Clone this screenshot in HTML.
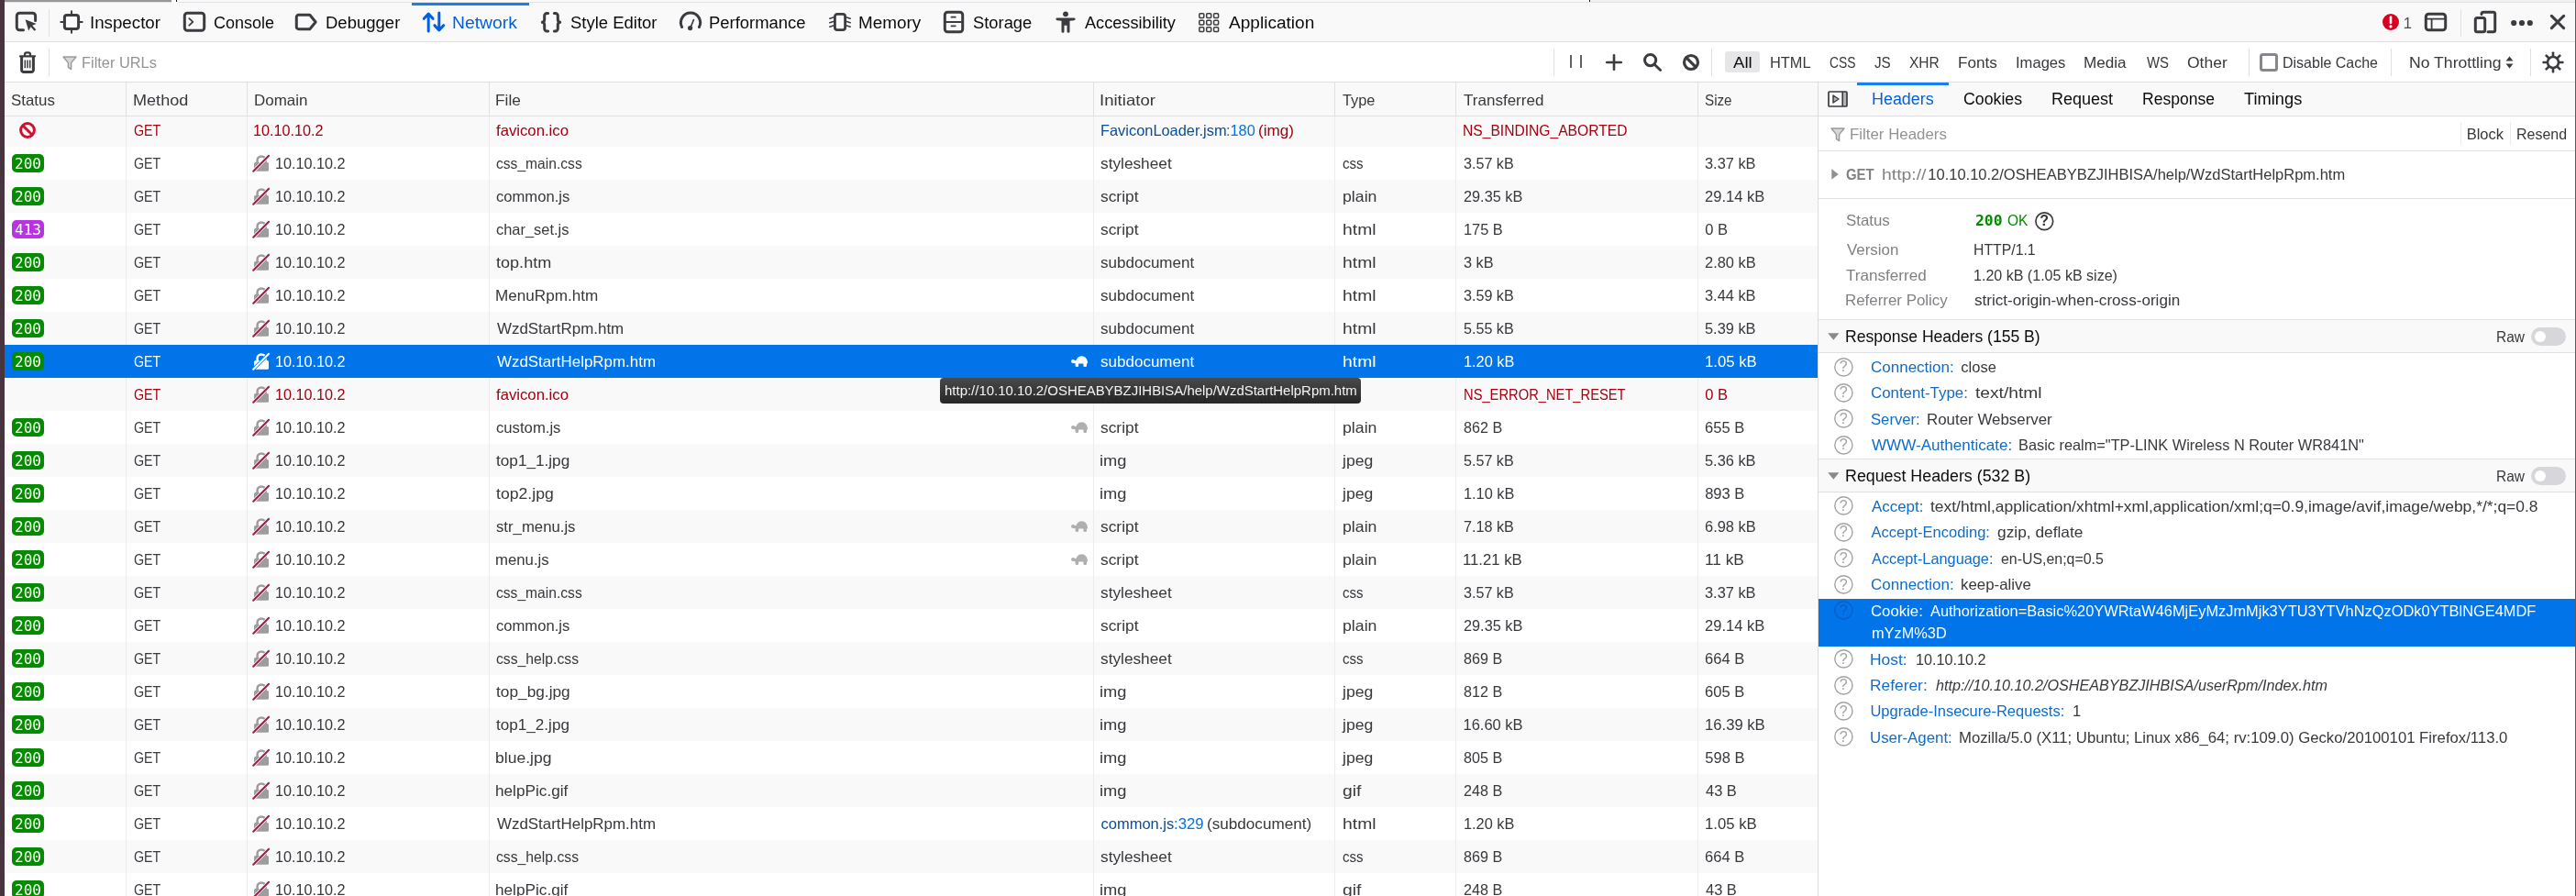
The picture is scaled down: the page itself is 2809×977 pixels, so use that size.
<!DOCTYPE html>
<html lang="en"><head><meta charset="utf-8"><title>Network - Developer Tools</title>
<style>
*{box-sizing:border-box}
html,body{margin:0;padding:0}
body{width:2809px;height:977px;overflow:hidden;position:relative;background:#fff;
 font-family:"Liberation Sans",sans-serif;font-size:16.5px;color:#38383d;will-change:transform}
.a{position:absolute;white-space:nowrap}
.t{position:absolute;white-space:nowrap;line-height:24px;height:24px;transform-origin:0 0}
svg{position:absolute;overflow:visible}
#strip{left:0;top:0;width:4.7px;height:977px;background:#48343e}
#topline{left:5px;top:0;width:2804px;height:3px;background:#fafafa;border-bottom:1px solid #e2e2e4}
#thumb{left:5px;top:0;width:182px;height:2px;background:#979797}
#toolbar{left:5px;top:3px;width:2804px;height:43px;background:#f9f9fa;border-bottom:1px solid #e0e0e2}
#filterbar{left:5px;top:46px;width:2804px;height:44px;background:#fff;border-bottom:1px solid #e0e0e2}
#thead{z-index:2;left:5px;top:90px;width:1976.5px;height:37px;background:#f9f9fa;border-bottom:1px solid #e0e0e2}
.vsep{z-index:3;position:absolute;width:1px;background:#e0e0e2}
.tab{color:#0c0c0d}
.tab.sel{color:#0060df}
.ph{color:#939396}
.row{position:absolute;left:5px;width:1976.5px;height:36px}
.row.odd{background:#f9f9fa}
.row.sel{background:#0074e8;color:#fff;z-index:4}
.row.err{color:#a4000f}
.badge{position:absolute;left:8px;top:8px;width:35px;height:20px;border-radius:5px;color:#fff;
 font-family:"DejaVu Sans Mono",monospace;font-size:16px;line-height:21.5px;text-align:center}
.b2{background:#058b00}
.b4{background:#b833e1}
.lnk{color:#0a4a9a}
.lnk b{font-weight:normal;color:#0074e8}
#side{left:1983px;top:90px;width:826px;height:887px;background:#fff}
#split{left:1981.5px;top:90px;width:1px;height:887px;background:#dcdcde}
#stabs{left:0;top:0;width:826px;height:37px;background:#f9f9fa;border-bottom:1px solid #e0e0e2}
.hl{position:absolute;left:0;width:826px;height:1px;background:#e0e0e2}
.sec{position:absolute;left:0;width:826px;height:37px;background:#f9f9fa;border-top:1px solid #e0e0e2;border-bottom:1px solid #e0e0e2}
.lbl{color:#808085}
.hn{color:#0f6cc8}
.dark{color:#0c0c0d}
#tip{z-index:5;left:1025px;top:412px;width:459px;height:28px;background:linear-gradient(rgba(68,68,68,.97),rgba(31,31,31,.97));border-radius:4px}
</style></head>
<body>
<div class="a" id="strip"></div><div class="a" id="topline"></div><div class="a" id="thumb"></div><div class="a" style="left:187px;top:0;width:8px;height:3px;background:#fff"></div><div class="a" style="left:192px;top:0;width:1px;height:2px;background:#111"></div><div class="a" style="left:1735px;top:0;width:1073px;height:2px;background:#f0f1f0"></div><div class="a" style="left:1729px;top:0;width:6px;height:2px;background:#fff"></div><div class="a" style="left:1733px;top:0;width:1px;height:2px;background:#111"></div>
<div class="a" id="toolbar">
<svg style="left:12px;top:10px" width="24" height="22" viewBox="0 0 24 22" ><path d="M21.6 9.5V4.2a3 3 0 0 0-3-3H4.3a3 3 0 0 0-3 3v12.6a3 3 0 0 0 3 3H8.5" fill="none" stroke="#3b3b40" stroke-width="3" stroke-linecap="round"/><path d="M10.6 8.2l3.6 12.2 2.3-4.2 4.1 4.6 1.7-1.5-4.1-4.6 4.4-1.7z" fill="#3b3b40"/></svg><div class="vsep" style="left:48px;top:7px;height:30px"></div><svg style="left:61px;top:9px" width="24" height="24" viewBox="0 0 24 24" ><rect x="4.4" y="4.4" width="15.2" height="15.2" rx="2.6" fill="none" stroke="#3b3b40" stroke-width="3"/><path d="M12 0.3v4M12 19.7v4M0.3 12h4M19.7 12h4" stroke="#3b3b40" stroke-width="2" stroke-linecap="round"/></svg><span class="t tab" style="left:93.34px;top:10.0px;transform:scaleX(1.0396);font-size:18px">Inspector</span><svg style="left:195px;top:10px" width="24" height="22" viewBox="0 0 24 22" ><rect x="1.3" y="1.3" width="21.4" height="19" rx="3" fill="none" stroke="#3b3b40" stroke-width="3"/><path d="M6.3 7.2l4 3.7-4 3.7" fill="none" stroke="#3b3b40" stroke-width="1.8" stroke-linecap="round" stroke-linejoin="round"/></svg><span class="t tab" style="left:227.90px;top:10.0px;font-size:18px">Console</span><svg style="left:317px;top:12px" width="24" height="18" viewBox="0 0 24 18" ><path d="M3.6 1.3h12.2l6.4 7.7-6.4 7.7H3.6a2.3 2.3 0 0 1-2.3-2.3V3.6a2.3 2.3 0 0 1 2.3-2.3z" fill="none" stroke="#3b3b40" stroke-width="3" stroke-linejoin="round"/></svg><span class="t tab" style="left:349.96px;top:10.0px;transform:scaleX(1.0289);font-size:18px">Debugger</span><div class="a" style="left:444px;top:0;width:128px;height:3px;background:#1580ee"></div><svg style="left:456px;top:10px" width="24" height="22" viewBox="0 0 24 22" ><path d="M6.2 21V2.2M1.3 7.3l4.9-5.2 4.9 5.2M17.8 1v18.8M12.9 14.7l4.9 5.2 4.9-5.2" fill="none" stroke="#0060df" stroke-width="3" stroke-linecap="round" stroke-linejoin="round"/></svg><span class="t tab sel" style="left:488.10px;top:10.0px;transform:scaleX(1.0724);font-size:18px">Network</span><svg style="left:585px;top:10px" width="22" height="24" viewBox="0 0 22 24" ><path d="M7.6 1.4H6.4a2.7 2.7 0 0 0-2.7 2.7v4.2c0 1.6-.9 2.7-2.4 2.9 1.5.2 2.4 1.3 2.4 2.9v4.2a2.7 2.7 0 0 0 2.7 2.7h1.2M14.4 1.4h1.2a2.7 2.7 0 0 1 2.7 2.7v4.2c0 1.6.9 2.7 2.4 2.9-1.5.2-2.4 1.3-2.4 2.9v4.2a2.7 2.7 0 0 1-2.7 2.7h-1.2" fill="none" stroke="#3b3b40" stroke-width="3" stroke-linecap="round" stroke-linejoin="round"/></svg><span class="t tab" style="left:616.78px;top:10.0px;transform:scaleX(1.0270);font-size:18px">Style Editor</span><svg style="left:736px;top:9px" width="24" height="22" viewBox="0 0 24 22" ><path d="M2.6 17.5A10.6 10.6 0 1 1 21.4 17.5" fill="none" stroke="#3b3b40" stroke-width="3" stroke-linecap="round"/><circle cx="11.6" cy="18.6" r="2.6" fill="#3b3b40"/><path d="M12 18l3.4-8.4" stroke="#3b3b40" stroke-width="1.6" stroke-linecap="round"/></svg><span class="t tab" style="left:768.17px;top:10.0px;transform:scaleX(1.0244);font-size:18px">Performance</span><svg style="left:898.5px;top:11px" width="24" height="20" viewBox="0 0 24 20" ><rect x="6.4" y="1.4" width="11.2" height="17.2" rx="2.6" fill="none" stroke="#3b3b40" stroke-width="2.8"/><path d="M0.8 6.2l3.8-1.2M0.8 10.7l3.8-1.2M0.8 15.2l3.8-1.2M23.2 6.2l-3.8-1.2M23.2 10.7l-3.8-1.2M23.2 15.2l-3.8-1.2" stroke="#3b3b40" stroke-width="1.5" stroke-linecap="round"/></svg><span class="t tab" style="left:930.63px;top:10.0px;transform:scaleX(1.0487);font-size:18px">Memory</span><svg style="left:1024px;top:9px" width="22" height="24" viewBox="0 0 22 24" ><rect x="1.3" y="1.3" width="19.4" height="21.4" rx="3" fill="none" stroke="#3b3b40" stroke-width="3"/><path d="M1.3 12h19.4" stroke="#3b3b40" stroke-width="2"/><path d="M8.4 6.7h4.4M8.4 16.3h4.4" stroke="#3b3b40" stroke-width="1.7" stroke-linecap="round"/></svg><span class="t tab" style="left:1056.08px;top:10.0px;transform:scaleX(1.0190);font-size:18px">Storage</span><svg style="left:1145.5px;top:9px" width="22" height="24" viewBox="0 0 22 24" ><circle cx="11" cy="3.3" r="2.9" fill="#3b3b40"/><path d="M1.8 7.4h18.4a1.3 1.3 0 0 1 0 2.8l-4.7.5v11.5a1.5 1.5 0 0 1-3 0v-6.4h-3v6.4a1.5 1.5 0 0 1-3 0V10.7l-4.7-.5a1.3 1.3 0 0 1 0-2.8z" fill="#3b3b40"/></svg><span class="t tab" style="left:1178.10px;top:10.0px;transform:scaleX(1.0089);font-size:18px">Accessibility</span><svg style="left:1302px;top:11px" width="22" height="22" viewBox="0 0 22 22" ><rect x="0.8" y="0.8" width="5" height="4.6" rx="1" fill="none" stroke="#3b3b40" stroke-width="1.5"/><rect x="8.700000000000001" y="0.8" width="5" height="4.6" rx="1" fill="none" stroke="#3b3b40" stroke-width="1.5"/><rect x="16.6" y="0.8" width="5" height="4.6" rx="1" fill="none" stroke="#3b3b40" stroke-width="1.5"/><rect x="0.8" y="8.3" width="5" height="4.6" rx="1" fill="none" stroke="#3b3b40" stroke-width="1.5"/><rect x="8.700000000000001" y="8.3" width="5" height="4.6" rx="1" fill="none" stroke="#3b3b40" stroke-width="1.5"/><rect x="16.6" y="8.3" width="5" height="4.6" rx="1" fill="none" stroke="#3b3b40" stroke-width="1.5"/><rect x="0.8" y="15.8" width="5" height="4.6" rx="1" fill="none" stroke="#3b3b40" stroke-width="1.5"/><rect x="8.700000000000001" y="15.8" width="5" height="4.6" rx="1" fill="none" stroke="#3b3b40" stroke-width="1.5"/><rect x="16.6" y="15.8" width="5" height="4.6" rx="1" fill="none" stroke="#3b3b40" stroke-width="1.5"/></svg><span class="t tab" style="left:1334.60px;top:10.0px;transform:scaleX(1.0593);font-size:18px">Application</span><svg style="left:2593px;top:12px" width="18" height="18" viewBox="0 0 18 18" ><circle cx="9" cy="9" r="9" fill="#d70022"/><path d="M9 3.6v6.4" stroke="#fff" stroke-width="2.6" stroke-linecap="round"/><circle cx="9" cy="13.9" r="1.6" fill="#fff"/></svg><span class="t" style="left:2615.80px;top:10.0px;color:#4a4a4f">1</span><svg style="left:2639px;top:11px" width="24" height="20" viewBox="0 0 24 20" ><rect x="1.3" y="1.3" width="21.4" height="17.4" rx="3" fill="none" stroke="#3b3b40" stroke-width="3"/><path d="M1.3 6.6h21.4M7.6 6.6v12" stroke="#3b3b40" stroke-width="1.8"/></svg><div class="vsep" style="left:2678px;top:7px;height:30px"></div><svg style="left:2693px;top:9px" width="24" height="24" viewBox="0 0 24 24" ><path d="M8 3.4V3.3a2 2 0 0 1 2-2h10.7a2 2 0 0 1 2 2v17.4a2 2 0 0 1-2 2H15" fill="none" stroke="#3b3b40" stroke-width="3" stroke-linecap="round"/><rect x="1.3" y="7.6" width="10.4" height="15.1" rx="2" fill="none" stroke="#3b3b40" stroke-width="3"/></svg><svg style="left:2733px;top:19px" width="24" height="6" viewBox="0 0 24 6" ><circle cx="3.2" cy="3" r="3.1" fill="#3b3b40"/><circle cx="12" cy="3" r="3.1" fill="#3b3b40"/><circle cx="20.8" cy="3" r="3.1" fill="#3b3b40"/></svg><svg style="left:2776px;top:13px" width="16" height="16" viewBox="0 0 16 16" ><path d="M1.4 1.4l13.2 13.2M14.6 1.4L1.4 14.6" stroke="#3b3b40" stroke-width="3" stroke-linecap="round"/></svg></div>
<div class="a" id="filterbar">
<svg style="left:16px;top:10px" width="18" height="24" viewBox="0 0 18 24" ><path d="M1 5.3h16M6 5V3.4a2 2 0 0 1 2-2h2a2 2 0 0 1 2 2V5" fill="none" stroke="#3b3b40" stroke-width="2.2" stroke-linecap="round"/><path d="M2.6 5.6v14.6a2.4 2.4 0 0 0 2.4 2.4h8a2.4 2.4 0 0 0 2.4-2.4V5.6" fill="none" stroke="#3b3b40" stroke-width="3"/><path d="M6.3 9.6v8.6M9 9.6v8.6M11.7 9.6v8.6" stroke="#3b3b40" stroke-width="1.5"/></svg><div class="vsep" style="left:48px;top:7px;height:30px"></div><svg style="left:63px;top:15px" width="16" height="16" viewBox="0 0 16 16" ><path d="M1 1h14l-5.4 6.6v7l-3.2-2.2V7.6z" fill="#d7d7db" stroke="#9a9a9e" stroke-width="1.4" stroke-linejoin="round"/></svg><span class="t ph" style="left:83.71px;top:10.0px;transform:scaleX(0.9918)">Filter URLs</span><div class="vsep" style="left:1689px;top:7px;height:30px"></div><svg style="left:1707px;top:14px" width="13" height="14" viewBox="0 0 13 14" ><path d="M1 0v14M12 0v14" stroke="#3b3b40" stroke-width="1.6"/></svg><svg style="left:1746px;top:13px" width="18" height="18" viewBox="0 0 18 18" ><path d="M9 1.2v15.6M1.2 9h15.6" stroke="#3b3b40" stroke-width="2.6" stroke-linecap="round"/></svg><svg style="left:1787px;top:12px" width="20" height="20" viewBox="0 0 20 20" ><circle cx="7.6" cy="7.6" r="6.1" fill="none" stroke="#3b3b40" stroke-width="3"/><path d="M12.4 12.4l6.2 6.2" stroke="#3b3b40" stroke-width="2.8" stroke-linecap="round"/></svg><svg style="left:1829.5px;top:13px" width="18" height="18" viewBox="0 0 18 18" ><circle cx="9" cy="9" r="7.5" fill="none" stroke="#3b3b40" stroke-width="3.2"/><path d="M3.6 3.6l10.8 10.8" stroke="#3b3b40" stroke-width="3.2"/></svg><div class="vsep" style="left:1861px;top:7px;height:30px"></div><div class="a" style="left:1876px;top:10px;width:38px;height:23px;background:#e6e6e8;border-radius:3px"></div><span class="t dark" style="left:1884.50px;top:10.0px;transform:scaleX(1.1291)">All</span><span class="t" style="left:1925.21px;top:10.0px;transform:scaleX(0.9921)">HTML</span><span class="t" style="left:1990.43px;top:10.0px;transform:scaleX(0.8390)">CSS</span><span class="t" style="left:2039.32px;top:10.0px;transform:scaleX(0.9210)">JS</span><span class="t" style="left:2077.22px;top:10.0px;transform:scaleX(0.9402)">XHR</span><span class="t" style="left:2130.15px;top:10.0px;transform:scaleX(1.0402)">Fonts</span><span class="t" style="left:2192.99px;top:10.0px;transform:scaleX(1.0046)">Images</span><span class="t" style="left:2267.15px;top:10.0px;transform:scaleX(1.0375)">Media</span><span class="t" style="left:2335.50px;top:10.0px;transform:scaleX(0.9005)">WS</span><span class="t" style="left:2380.26px;top:10.0px;transform:scaleX(1.0602)">Other</span><div class="vsep" style="left:2447px;top:7px;height:30px"></div><div class="a" style="left:2459px;top:12px;width:20px;height:20px;border:3px solid #87878b;border-radius:3.5px;background:#fff"></div><span class="t" style="left:2484.44px;top:10.0px;transform:scaleX(0.9693)">Disable Cache</span><div class="vsep" style="left:2602px;top:7px;height:30px"></div><span class="t" style="left:2621.61px;top:10.0px;transform:scaleX(1.0675)">No Throttling</span><svg style="left:2727px;top:15px" width="9" height="14" viewBox="0 0 9 14" ><path d="M0.5 5.6L4.5 0.6l4 5zM0.5 8.4l4 5 4-5z" fill="#3b3b40"/></svg><div class="vsep" style="left:2754px;top:7px;height:30px"></div><svg style="left:2766.5px;top:10px" width="24" height="24" viewBox="0 0 24 24" ><rect x="10.7" y="0.4" width="2.6" height="6" rx="0.8" fill="#3b3b40" transform="rotate(0 12 12)"/><rect x="10.7" y="0.4" width="2.6" height="6" rx="0.8" fill="#3b3b40" transform="rotate(45 12 12)"/><rect x="10.7" y="0.4" width="2.6" height="6" rx="0.8" fill="#3b3b40" transform="rotate(90 12 12)"/><rect x="10.7" y="0.4" width="2.6" height="6" rx="0.8" fill="#3b3b40" transform="rotate(135 12 12)"/><rect x="10.7" y="0.4" width="2.6" height="6" rx="0.8" fill="#3b3b40" transform="rotate(180 12 12)"/><rect x="10.7" y="0.4" width="2.6" height="6" rx="0.8" fill="#3b3b40" transform="rotate(225 12 12)"/><rect x="10.7" y="0.4" width="2.6" height="6" rx="0.8" fill="#3b3b40" transform="rotate(270 12 12)"/><rect x="10.7" y="0.4" width="2.6" height="6" rx="0.8" fill="#3b3b40" transform="rotate(315 12 12)"/><circle cx="12" cy="12" r="6" fill="none" stroke="#3b3b40" stroke-width="2.6"/></svg></div>
<div class="a" id="thead">
<span class="t" style="left:7.48px;top:6.7px;transform:scaleX(1.0236)">Status</span><span class="t" style="left:139.58px;top:6.7px;transform:scaleX(1.0956)">Method</span><span class="t" style="left:272.06px;top:6.7px;transform:scaleX(1.0297)">Domain</span><span class="t" style="left:535.04px;top:6.7px;transform:scaleX(1.0483)">File</span><span class="t" style="left:1194.01px;top:6.7px;transform:scaleX(1.1257)">Initiator</span><span class="t" style="left:1459.40px;top:6.7px;transform:scaleX(0.9915)">Type</span><span class="t" style="left:1591.39px;top:6.7px;transform:scaleX(1.0325)">Transferred</span><span class="t" style="left:1854.26px;top:6.7px;transform:scaleX(0.9212)">Size</span></div>
<div id="rows">
<div class="row odd err" style="top:124px"><svg style="left:16px;top:9px" width="18" height="18" viewBox="0 0 18 18"><circle cx="9" cy="9" r="7.4" fill="none" stroke="#cc1230" stroke-width="3"/><path d="M3.7 3.7l10.6 10.6" stroke="#cc1230" stroke-width="3"/></svg><span class="t" style="left:140.71px;top:5.9px;transform:scaleX(0.8613)">GET</span><span class="t" style="left:271.32px;top:5.9px;transform:scaleX(0.9827)">10.10.10.2</span><span class="t" style="left:536.30px;top:5.9px;transform:scaleX(1.0132)">favicon.ico</span><span class="t" style="left:1195.11px;top:5.9px;transform:scaleX(0.9931);color:#0b4d96">FaviconLoader.jsm</span><span class="t" style="left:1331.82px;top:5.9px;transform:scaleX(0.9888);color:#0074e8">:180</span><span class="t" style="left:1367.36px;top:5.9px;transform:scaleX(1.0371)">(img)</span><span class="t" style="left:1590.47px;top:5.9px;transform:scaleX(0.9468)">NS_BINDING_ABORTED</span></div>
<div class="row" style="top:160px"><span class="badge b2">200</span><span class="t" style="left:140.71px;top:5.9px;transform:scaleX(0.8613)">GET</span><svg style="left:270.2px;top:8px" width="20" height="20" viewBox="0 0 20 20"><path d="M5.6 9.6V6.9a4.5 4.5 0 0 1 9 0V9.6" fill="none" stroke="#9d9d9f" stroke-width="2.5"/><rect x="2" y="9" width="16" height="9.8" rx="1.5" fill="#9d9d9f"/><path d="M1.4 18.5L17.9 2" stroke="#fff" stroke-width="3.6"/><path d="M1.2 18.7L18.1 1.8" stroke="#b3163f" stroke-width="2.1" stroke-linecap="round"/></svg><span class="t" style="left:295.32px;top:5.9px;transform:scaleX(0.9827)">10.10.10.2</span><span class="t" style="left:535.84px;top:5.9px;transform:scaleX(0.9461)">css_main.css</span><span class="t" style="left:1195.28px;top:5.9px;transform:scaleX(1.0460)">stylesheet</span><span class="t" style="left:1459.36px;top:5.9px;transform:scaleX(0.9106)">css</span><span class="t" style="left:1591.11px;top:5.9px;transform:scaleX(0.9771)">3.57 kB</span><span class="t" style="left:1854.30px;top:5.9px;transform:scaleX(0.9918)">3.37 kB</span></div>
<div class="row odd" style="top:196px"><span class="badge b2">200</span><span class="t" style="left:140.71px;top:5.9px;transform:scaleX(0.8613)">GET</span><svg style="left:270.2px;top:8px" width="20" height="20" viewBox="0 0 20 20"><path d="M5.6 9.6V6.9a4.5 4.5 0 0 1 9 0V9.6" fill="none" stroke="#9d9d9f" stroke-width="2.5"/><rect x="2" y="9" width="16" height="9.8" rx="1.5" fill="#9d9d9f"/><path d="M1.4 18.5L17.9 2" stroke="#f9f9fa" stroke-width="3.6"/><path d="M1.2 18.7L18.1 1.8" stroke="#b3163f" stroke-width="2.1" stroke-linecap="round"/></svg><span class="t" style="left:295.32px;top:5.9px;transform:scaleX(0.9827)">10.10.10.2</span><span class="t" style="left:535.80px;top:5.9px;transform:scaleX(1.0061)">common.js</span><span class="t" style="left:1195.28px;top:5.9px;transform:scaleX(1.0530)">script</span><span class="t" style="left:1458.93px;top:5.9px;transform:scaleX(1.0735)">plain</span><span class="t" style="left:1590.91px;top:5.9px;transform:scaleX(0.9870)">29.35 kB</span><span class="t" style="left:1854.10px;top:5.9px">29.14 kB</span></div>
<div class="row" style="top:232px"><span class="badge b4">413</span><span class="t" style="left:140.71px;top:5.9px;transform:scaleX(0.8613)">GET</span><svg style="left:270.2px;top:8px" width="20" height="20" viewBox="0 0 20 20"><path d="M5.6 9.6V6.9a4.5 4.5 0 0 1 9 0V9.6" fill="none" stroke="#9d9d9f" stroke-width="2.5"/><rect x="2" y="9" width="16" height="9.8" rx="1.5" fill="#9d9d9f"/><path d="M1.4 18.5L17.9 2" stroke="#fff" stroke-width="3.6"/><path d="M1.2 18.7L18.1 1.8" stroke="#b3163f" stroke-width="2.1" stroke-linecap="round"/></svg><span class="t" style="left:295.32px;top:5.9px;transform:scaleX(0.9827)">10.10.10.2</span><span class="t" style="left:535.80px;top:5.9px;transform:scaleX(0.9945)">char_set.js</span><span class="t" style="left:1195.28px;top:5.9px;transform:scaleX(1.0530)">script</span><span class="t" style="left:1458.71px;top:5.9px;transform:scaleX(1.1722)">html</span><span class="t" style="left:1590.51px;top:5.9px;transform:scaleX(0.9899)">175 B</span><span class="t" style="left:1854.30px;top:5.9px">0 B</span></div>
<div class="row odd" style="top:268px"><span class="badge b2">200</span><span class="t" style="left:140.71px;top:5.9px;transform:scaleX(0.8613)">GET</span><svg style="left:270.2px;top:8px" width="20" height="20" viewBox="0 0 20 20"><path d="M5.6 9.6V6.9a4.5 4.5 0 0 1 9 0V9.6" fill="none" stroke="#9d9d9f" stroke-width="2.5"/><rect x="2" y="9" width="16" height="9.8" rx="1.5" fill="#9d9d9f"/><path d="M1.4 18.5L17.9 2" stroke="#f9f9fa" stroke-width="3.6"/><path d="M1.2 18.7L18.1 1.8" stroke="#b3163f" stroke-width="2.1" stroke-linecap="round"/></svg><span class="t" style="left:295.32px;top:5.9px;transform:scaleX(0.9827)">10.10.10.2</span><span class="t" style="left:536.28px;top:5.9px;transform:scaleX(1.0952)">top.htm</span><span class="t" style="left:1195.29px;top:5.9px;transform:scaleX(1.0316)">subdocument</span><span class="t" style="left:1458.71px;top:5.9px;transform:scaleX(1.1722)">html</span><span class="t" style="left:1591.11px;top:5.9px;transform:scaleX(0.9870)">3 kB</span><span class="t" style="left:1854.10px;top:5.9px;transform:scaleX(0.9954)">2.80 kB</span></div>
<div class="row" style="top:304px"><span class="badge b2">200</span><span class="t" style="left:140.71px;top:5.9px;transform:scaleX(0.8613)">GET</span><svg style="left:270.2px;top:8px" width="20" height="20" viewBox="0 0 20 20"><path d="M5.6 9.6V6.9a4.5 4.5 0 0 1 9 0V9.6" fill="none" stroke="#9d9d9f" stroke-width="2.5"/><rect x="2" y="9" width="16" height="9.8" rx="1.5" fill="#9d9d9f"/><path d="M1.4 18.5L17.9 2" stroke="#fff" stroke-width="3.6"/><path d="M1.2 18.7L18.1 1.8" stroke="#b3163f" stroke-width="2.1" stroke-linecap="round"/></svg><span class="t" style="left:295.32px;top:5.9px;transform:scaleX(0.9827)">10.10.10.2</span><span class="t" style="left:535.15px;top:5.9px;transform:scaleX(1.0373)">MenuRpm.htm</span><span class="t" style="left:1195.29px;top:5.9px;transform:scaleX(1.0316)">subdocument</span><span class="t" style="left:1458.71px;top:5.9px;transform:scaleX(1.1722)">html</span><span class="t" style="left:1591.11px;top:5.9px;transform:scaleX(0.9771)">3.59 kB</span><span class="t" style="left:1854.30px;top:5.9px;transform:scaleX(0.9918)">3.44 kB</span></div>
<div class="row odd" style="top:340px"><span class="badge b2">200</span><span class="t" style="left:140.71px;top:5.9px;transform:scaleX(0.8613)">GET</span><svg style="left:270.2px;top:8px" width="20" height="20" viewBox="0 0 20 20"><path d="M5.6 9.6V6.9a4.5 4.5 0 0 1 9 0V9.6" fill="none" stroke="#9d9d9f" stroke-width="2.5"/><rect x="2" y="9" width="16" height="9.8" rx="1.5" fill="#9d9d9f"/><path d="M1.4 18.5L17.9 2" stroke="#f9f9fa" stroke-width="3.6"/><path d="M1.2 18.7L18.1 1.8" stroke="#b3163f" stroke-width="2.1" stroke-linecap="round"/></svg><span class="t" style="left:295.32px;top:5.9px;transform:scaleX(0.9827)">10.10.10.2</span><span class="t" style="left:536.50px;top:5.9px;transform:scaleX(1.0252)">WzdStartRpm.htm</span><span class="t" style="left:1195.29px;top:5.9px;transform:scaleX(1.0316)">subdocument</span><span class="t" style="left:1458.71px;top:5.9px;transform:scaleX(1.1722)">html</span><span class="t" style="left:1591.11px;top:5.9px;transform:scaleX(0.9771)">5.55 kB</span><span class="t" style="left:1854.30px;top:5.9px;transform:scaleX(0.9918)">5.39 kB</span></div>
<div class="row sel" style="top:376px"><span class="badge b2">200</span><span class="t" style="left:140.71px;top:5.9px;transform:scaleX(0.8613)">GET</span><svg style="left:270.2px;top:8px" width="20" height="20" viewBox="0 0 20 20"><path d="M5.6 9.6V6.9a4.5 4.5 0 0 1 9 0V9.6" fill="none" stroke="#fff" stroke-width="2.5"/><rect x="2" y="9" width="16" height="9.8" rx="1.5" fill="#fff"/><path d="M1.4 18.5L17.9 2" stroke="#0074e8" stroke-width="3.6"/><path d="M1.2 18.7L18.1 1.8" stroke="#fff" stroke-width="2.1" stroke-linecap="round"/></svg><span class="t" style="left:295.32px;top:5.9px;transform:scaleX(0.9827)">10.10.10.2</span><span class="t" style="left:536.50px;top:5.9px;transform:scaleX(1.0253)">WzdStartHelpRpm.htm</span><svg style="left:1162px;top:11px" width="20" height="14" viewBox="0 0 20 14"><path d="M6 9.4C6 4.4 8.8 1.3 12.5 1.3S19 4.4 19 9.4z" fill="#fff"/><circle cx="3" cy="7" r="1.95" fill="#fff"/><path d="M2.6 5.2L7.4 6.6V9.4L3.4 8.9z" fill="#fff"/><rect x="5.6" y="8" width="3.5" height="4.9" rx="1.5" fill="#fff"/><rect x="14.4" y="8" width="3.6" height="4.9" rx="1.5" fill="#fff"/></svg><span class="t" style="left:1195.29px;top:5.9px;transform:scaleX(1.0316)">subdocument</span><span class="t" style="left:1458.71px;top:5.9px;transform:scaleX(1.1722)">html</span><span class="t" style="left:1590.51px;top:5.9px;transform:scaleX(0.9880)">1.20 kB</span><span class="t" style="left:1853.69px;top:5.9px;transform:scaleX(1.0121)">1.05 kB</span></div>
<div class="row odd err" style="top:412px"><span class="t" style="left:140.71px;top:5.9px;transform:scaleX(0.8613)">GET</span><svg style="left:270.2px;top:8px" width="20" height="20" viewBox="0 0 20 20"><path d="M5.6 9.6V6.9a4.5 4.5 0 0 1 9 0V9.6" fill="none" stroke="#9d9d9f" stroke-width="2.5"/><rect x="2" y="9" width="16" height="9.8" rx="1.5" fill="#9d9d9f"/><path d="M1.4 18.5L17.9 2" stroke="#f9f9fa" stroke-width="3.6"/><path d="M1.2 18.7L18.1 1.8" stroke="#b3163f" stroke-width="2.1" stroke-linecap="round"/></svg><span class="t" style="left:295.32px;top:5.9px;transform:scaleX(0.9827)">10.10.10.2</span><span class="t" style="left:536.30px;top:5.9px;transform:scaleX(1.0132)">favicon.ico</span><span class="t" style="left:1195.11px;top:5.9px;transform:scaleX(0.9931);color:#0b4d96">FaviconLoader.jsm</span><span class="t" style="left:1331.82px;top:5.9px;transform:scaleX(0.9888);color:#0074e8">:180</span><span class="t" style="left:1367.36px;top:5.9px;transform:scaleX(1.0371)">(img)</span><span class="t" style="left:1590.54px;top:5.9px;transform:scaleX(0.8917)">NS_ERROR_NET_RESET</span><span class="t" style="left:1854.30px;top:5.9px">0 B</span></div>
<div class="row" style="top:448px"><span class="badge b2">200</span><span class="t" style="left:140.71px;top:5.9px;transform:scaleX(0.8613)">GET</span><svg style="left:270.2px;top:8px" width="20" height="20" viewBox="0 0 20 20"><path d="M5.6 9.6V6.9a4.5 4.5 0 0 1 9 0V9.6" fill="none" stroke="#9d9d9f" stroke-width="2.5"/><rect x="2" y="9" width="16" height="9.8" rx="1.5" fill="#9d9d9f"/><path d="M1.4 18.5L17.9 2" stroke="#fff" stroke-width="3.6"/><path d="M1.2 18.7L18.1 1.8" stroke="#b3163f" stroke-width="2.1" stroke-linecap="round"/></svg><span class="t" style="left:295.32px;top:5.9px;transform:scaleX(0.9827)">10.10.10.2</span><span class="t" style="left:535.79px;top:5.9px;transform:scaleX(1.0112)">custom.js</span><svg style="left:1162px;top:11px" width="20" height="14" viewBox="0 0 20 14"><path d="M6 9.4C6 4.4 8.8 1.3 12.5 1.3S19 4.4 19 9.4z" fill="#afafaf"/><circle cx="3" cy="7" r="1.95" fill="#afafaf"/><path d="M2.6 5.2L7.4 6.6V9.4L3.4 8.9z" fill="#afafaf"/><rect x="5.6" y="8" width="3.5" height="4.9" rx="1.5" fill="#afafaf"/><rect x="14.4" y="8" width="3.6" height="4.9" rx="1.5" fill="#afafaf"/></svg><span class="t" style="left:1195.28px;top:5.9px;transform:scaleX(1.0530)">script</span><span class="t" style="left:1458.93px;top:5.9px;transform:scaleX(1.0735)">plain</span><span class="t" style="left:1591.02px;top:5.9px;transform:scaleX(0.9780)">862 B</span><span class="t" style="left:1854.10px;top:5.9px">655 B</span></div>
<div class="row odd" style="top:484px"><span class="badge b2">200</span><span class="t" style="left:140.71px;top:5.9px;transform:scaleX(0.8613)">GET</span><svg style="left:270.2px;top:8px" width="20" height="20" viewBox="0 0 20 20"><path d="M5.6 9.6V6.9a4.5 4.5 0 0 1 9 0V9.6" fill="none" stroke="#9d9d9f" stroke-width="2.5"/><rect x="2" y="9" width="16" height="9.8" rx="1.5" fill="#9d9d9f"/><path d="M1.4 18.5L17.9 2" stroke="#f9f9fa" stroke-width="3.6"/><path d="M1.2 18.7L18.1 1.8" stroke="#b3163f" stroke-width="2.1" stroke-linecap="round"/></svg><span class="t" style="left:295.32px;top:5.9px;transform:scaleX(0.9827)">10.10.10.2</span><span class="t" style="left:536.29px;top:5.9px;transform:scaleX(1.0409)">top1_1.jpg</span><span class="t" style="left:1194.48px;top:5.9px;transform:scaleX(1.1097)">img</span><span class="t" style="left:1458.83px;top:5.9px;transform:scaleX(1.0678)">jpeg</span><span class="t" style="left:1591.11px;top:5.9px;transform:scaleX(0.9771)">5.57 kB</span><span class="t" style="left:1854.30px;top:5.9px;transform:scaleX(0.9918)">5.36 kB</span></div>
<div class="row" style="top:520px"><span class="badge b2">200</span><span class="t" style="left:140.71px;top:5.9px;transform:scaleX(0.8613)">GET</span><svg style="left:270.2px;top:8px" width="20" height="20" viewBox="0 0 20 20"><path d="M5.6 9.6V6.9a4.5 4.5 0 0 1 9 0V9.6" fill="none" stroke="#9d9d9f" stroke-width="2.5"/><rect x="2" y="9" width="16" height="9.8" rx="1.5" fill="#9d9d9f"/><path d="M1.4 18.5L17.9 2" stroke="#fff" stroke-width="3.6"/><path d="M1.2 18.7L18.1 1.8" stroke="#b3163f" stroke-width="2.1" stroke-linecap="round"/></svg><span class="t" style="left:295.32px;top:5.9px;transform:scaleX(0.9827)">10.10.10.2</span><span class="t" style="left:536.29px;top:5.9px;transform:scaleX(1.0688)">top2.jpg</span><span class="t" style="left:1194.48px;top:5.9px;transform:scaleX(1.1097)">img</span><span class="t" style="left:1458.83px;top:5.9px;transform:scaleX(1.0678)">jpeg</span><span class="t" style="left:1590.51px;top:5.9px;transform:scaleX(0.9880)">1.10 kB</span><span class="t" style="left:1854.20px;top:5.9px">893 B</span></div>
<div class="row odd" style="top:556px"><span class="badge b2">200</span><span class="t" style="left:140.71px;top:5.9px;transform:scaleX(0.8613)">GET</span><svg style="left:270.2px;top:8px" width="20" height="20" viewBox="0 0 20 20"><path d="M5.6 9.6V6.9a4.5 4.5 0 0 1 9 0V9.6" fill="none" stroke="#9d9d9f" stroke-width="2.5"/><rect x="2" y="9" width="16" height="9.8" rx="1.5" fill="#9d9d9f"/><path d="M1.4 18.5L17.9 2" stroke="#f9f9fa" stroke-width="3.6"/><path d="M1.2 18.7L18.1 1.8" stroke="#b3163f" stroke-width="2.1" stroke-linecap="round"/></svg><span class="t" style="left:295.32px;top:5.9px;transform:scaleX(0.9827)">10.10.10.2</span><span class="t" style="left:536.09px;top:5.9px;transform:scaleX(1.0139)">str_menu.js</span><svg style="left:1162px;top:11px" width="20" height="14" viewBox="0 0 20 14"><path d="M6 9.4C6 4.4 8.8 1.3 12.5 1.3S19 4.4 19 9.4z" fill="#afafaf"/><circle cx="3" cy="7" r="1.95" fill="#afafaf"/><path d="M2.6 5.2L7.4 6.6V9.4L3.4 8.9z" fill="#afafaf"/><rect x="5.6" y="8" width="3.5" height="4.9" rx="1.5" fill="#afafaf"/><rect x="14.4" y="8" width="3.6" height="4.9" rx="1.5" fill="#afafaf"/></svg><span class="t" style="left:1195.28px;top:5.9px;transform:scaleX(1.0530)">script</span><span class="t" style="left:1458.93px;top:5.9px;transform:scaleX(1.0735)">plain</span><span class="t" style="left:1590.92px;top:5.9px;transform:scaleX(0.9807)">7.18 kB</span><span class="t" style="left:1854.10px;top:5.9px;transform:scaleX(0.9954)">6.98 kB</span></div>
<div class="row" style="top:592px"><span class="badge b2">200</span><span class="t" style="left:140.71px;top:5.9px;transform:scaleX(0.8613)">GET</span><svg style="left:270.2px;top:8px" width="20" height="20" viewBox="0 0 20 20"><path d="M5.6 9.6V6.9a4.5 4.5 0 0 1 9 0V9.6" fill="none" stroke="#9d9d9f" stroke-width="2.5"/><rect x="2" y="9" width="16" height="9.8" rx="1.5" fill="#9d9d9f"/><path d="M1.4 18.5L17.9 2" stroke="#fff" stroke-width="3.6"/><path d="M1.2 18.7L18.1 1.8" stroke="#b3163f" stroke-width="2.1" stroke-linecap="round"/></svg><span class="t" style="left:295.32px;top:5.9px;transform:scaleX(0.9827)">10.10.10.2</span><span class="t" style="left:535.48px;top:5.9px;transform:scaleX(1.0156)">menu.js</span><svg style="left:1162px;top:11px" width="20" height="14" viewBox="0 0 20 14"><path d="M6 9.4C6 4.4 8.8 1.3 12.5 1.3S19 4.4 19 9.4z" fill="#afafaf"/><circle cx="3" cy="7" r="1.95" fill="#afafaf"/><path d="M2.6 5.2L7.4 6.6V9.4L3.4 8.9z" fill="#afafaf"/><rect x="5.6" y="8" width="3.5" height="4.9" rx="1.5" fill="#afafaf"/><rect x="14.4" y="8" width="3.6" height="4.9" rx="1.5" fill="#afafaf"/></svg><span class="t" style="left:1195.28px;top:5.9px;transform:scaleX(1.0530)">script</span><span class="t" style="left:1458.93px;top:5.9px;transform:scaleX(1.0735)">plain</span><span class="t" style="left:1590.48px;top:5.9px;transform:scaleX(1.0129)">11.21 kB</span><span class="t" style="left:1853.65px;top:5.9px;transform:scaleX(1.0446)">11 kB</span></div>
<div class="row odd" style="top:628px"><span class="badge b2">200</span><span class="t" style="left:140.71px;top:5.9px;transform:scaleX(0.8613)">GET</span><svg style="left:270.2px;top:8px" width="20" height="20" viewBox="0 0 20 20"><path d="M5.6 9.6V6.9a4.5 4.5 0 0 1 9 0V9.6" fill="none" stroke="#9d9d9f" stroke-width="2.5"/><rect x="2" y="9" width="16" height="9.8" rx="1.5" fill="#9d9d9f"/><path d="M1.4 18.5L17.9 2" stroke="#f9f9fa" stroke-width="3.6"/><path d="M1.2 18.7L18.1 1.8" stroke="#b3163f" stroke-width="2.1" stroke-linecap="round"/></svg><span class="t" style="left:295.32px;top:5.9px;transform:scaleX(0.9827)">10.10.10.2</span><span class="t" style="left:535.84px;top:5.9px;transform:scaleX(0.9461)">css_main.css</span><span class="t" style="left:1195.28px;top:5.9px;transform:scaleX(1.0460)">stylesheet</span><span class="t" style="left:1459.36px;top:5.9px;transform:scaleX(0.9106)">css</span><span class="t" style="left:1591.11px;top:5.9px;transform:scaleX(0.9771)">3.57 kB</span><span class="t" style="left:1854.30px;top:5.9px;transform:scaleX(0.9918)">3.37 kB</span></div>
<div class="row" style="top:664px"><span class="badge b2">200</span><span class="t" style="left:140.71px;top:5.9px;transform:scaleX(0.8613)">GET</span><svg style="left:270.2px;top:8px" width="20" height="20" viewBox="0 0 20 20"><path d="M5.6 9.6V6.9a4.5 4.5 0 0 1 9 0V9.6" fill="none" stroke="#9d9d9f" stroke-width="2.5"/><rect x="2" y="9" width="16" height="9.8" rx="1.5" fill="#9d9d9f"/><path d="M1.4 18.5L17.9 2" stroke="#fff" stroke-width="3.6"/><path d="M1.2 18.7L18.1 1.8" stroke="#b3163f" stroke-width="2.1" stroke-linecap="round"/></svg><span class="t" style="left:295.32px;top:5.9px;transform:scaleX(0.9827)">10.10.10.2</span><span class="t" style="left:535.80px;top:5.9px;transform:scaleX(1.0061)">common.js</span><span class="t" style="left:1195.28px;top:5.9px;transform:scaleX(1.0530)">script</span><span class="t" style="left:1458.93px;top:5.9px;transform:scaleX(1.0735)">plain</span><span class="t" style="left:1590.91px;top:5.9px;transform:scaleX(0.9870)">29.35 kB</span><span class="t" style="left:1854.10px;top:5.9px">29.14 kB</span></div>
<div class="row odd" style="top:700px"><span class="badge b2">200</span><span class="t" style="left:140.71px;top:5.9px;transform:scaleX(0.8613)">GET</span><svg style="left:270.2px;top:8px" width="20" height="20" viewBox="0 0 20 20"><path d="M5.6 9.6V6.9a4.5 4.5 0 0 1 9 0V9.6" fill="none" stroke="#9d9d9f" stroke-width="2.5"/><rect x="2" y="9" width="16" height="9.8" rx="1.5" fill="#9d9d9f"/><path d="M1.4 18.5L17.9 2" stroke="#f9f9fa" stroke-width="3.6"/><path d="M1.2 18.7L18.1 1.8" stroke="#b3163f" stroke-width="2.1" stroke-linecap="round"/></svg><span class="t" style="left:295.32px;top:5.9px;transform:scaleX(0.9827)">10.10.10.2</span><span class="t" style="left:535.83px;top:5.9px;transform:scaleX(0.9527)">css_help.css</span><span class="t" style="left:1195.28px;top:5.9px;transform:scaleX(1.0460)">stylesheet</span><span class="t" style="left:1459.36px;top:5.9px;transform:scaleX(0.9106)">css</span><span class="t" style="left:1591.02px;top:5.9px;transform:scaleX(0.9780)">869 B</span><span class="t" style="left:1854.10px;top:5.9px">664 B</span></div>
<div class="row" style="top:736px"><span class="badge b2">200</span><span class="t" style="left:140.71px;top:5.9px;transform:scaleX(0.8613)">GET</span><svg style="left:270.2px;top:8px" width="20" height="20" viewBox="0 0 20 20"><path d="M5.6 9.6V6.9a4.5 4.5 0 0 1 9 0V9.6" fill="none" stroke="#9d9d9f" stroke-width="2.5"/><rect x="2" y="9" width="16" height="9.8" rx="1.5" fill="#9d9d9f"/><path d="M1.4 18.5L17.9 2" stroke="#fff" stroke-width="3.6"/><path d="M1.2 18.7L18.1 1.8" stroke="#b3163f" stroke-width="2.1" stroke-linecap="round"/></svg><span class="t" style="left:295.32px;top:5.9px;transform:scaleX(0.9827)">10.10.10.2</span><span class="t" style="left:536.29px;top:5.9px;transform:scaleX(1.0475)">top_bg.jpg</span><span class="t" style="left:1194.48px;top:5.9px;transform:scaleX(1.1097)">img</span><span class="t" style="left:1458.83px;top:5.9px;transform:scaleX(1.0678)">jpeg</span><span class="t" style="left:1591.02px;top:5.9px;transform:scaleX(0.9780)">812 B</span><span class="t" style="left:1854.10px;top:5.9px">605 B</span></div>
<div class="row odd" style="top:772px"><span class="badge b2">200</span><span class="t" style="left:140.71px;top:5.9px;transform:scaleX(0.8613)">GET</span><svg style="left:270.2px;top:8px" width="20" height="20" viewBox="0 0 20 20"><path d="M5.6 9.6V6.9a4.5 4.5 0 0 1 9 0V9.6" fill="none" stroke="#9d9d9f" stroke-width="2.5"/><rect x="2" y="9" width="16" height="9.8" rx="1.5" fill="#9d9d9f"/><path d="M1.4 18.5L17.9 2" stroke="#f9f9fa" stroke-width="3.6"/><path d="M1.2 18.7L18.1 1.8" stroke="#b3163f" stroke-width="2.1" stroke-linecap="round"/></svg><span class="t" style="left:295.32px;top:5.9px;transform:scaleX(0.9827)">10.10.10.2</span><span class="t" style="left:536.29px;top:5.9px;transform:scaleX(1.0370)">top1_2.jpg</span><span class="t" style="left:1194.48px;top:5.9px;transform:scaleX(1.1097)">img</span><span class="t" style="left:1458.83px;top:5.9px;transform:scaleX(1.0678)">jpeg</span><span class="t" style="left:1590.50px;top:5.9px">16.60 kB</span><span class="t" style="left:1853.69px;top:5.9px;transform:scaleX(1.0091)">16.39 kB</span></div>
<div class="row" style="top:808px"><span class="badge b2">200</span><span class="t" style="left:140.71px;top:5.9px;transform:scaleX(0.8613)">GET</span><svg style="left:270.2px;top:8px" width="20" height="20" viewBox="0 0 20 20"><path d="M5.6 9.6V6.9a4.5 4.5 0 0 1 9 0V9.6" fill="none" stroke="#9d9d9f" stroke-width="2.5"/><rect x="2" y="9" width="16" height="9.8" rx="1.5" fill="#9d9d9f"/><path d="M1.4 18.5L17.9 2" stroke="#fff" stroke-width="3.6"/><path d="M1.2 18.7L18.1 1.8" stroke="#b3163f" stroke-width="2.1" stroke-linecap="round"/></svg><span class="t" style="left:295.32px;top:5.9px;transform:scaleX(0.9827)">10.10.10.2</span><span class="t" style="left:535.44px;top:5.9px;transform:scaleX(1.0623)">blue.jpg</span><span class="t" style="left:1194.48px;top:5.9px;transform:scaleX(1.1097)">img</span><span class="t" style="left:1458.83px;top:5.9px;transform:scaleX(1.0678)">jpeg</span><span class="t" style="left:1591.02px;top:5.9px;transform:scaleX(0.9780)">805 B</span><span class="t" style="left:1854.30px;top:5.9px">598 B</span></div>
<div class="row odd" style="top:844px"><span class="badge b2">200</span><span class="t" style="left:140.71px;top:5.9px;transform:scaleX(0.8613)">GET</span><svg style="left:270.2px;top:8px" width="20" height="20" viewBox="0 0 20 20"><path d="M5.6 9.6V6.9a4.5 4.5 0 0 1 9 0V9.6" fill="none" stroke="#9d9d9f" stroke-width="2.5"/><rect x="2" y="9" width="16" height="9.8" rx="1.5" fill="#9d9d9f"/><path d="M1.4 18.5L17.9 2" stroke="#f9f9fa" stroke-width="3.6"/><path d="M1.2 18.7L18.1 1.8" stroke="#b3163f" stroke-width="2.1" stroke-linecap="round"/></svg><span class="t" style="left:295.32px;top:5.9px;transform:scaleX(0.9827)">10.10.10.2</span><span class="t" style="left:535.35px;top:5.9px;transform:scaleX(1.0420)">helpPic.gif</span><span class="t" style="left:1194.48px;top:5.9px;transform:scaleX(1.1097)">img</span><span class="t" style="left:1459.30px;top:5.9px;transform:scaleX(1.1687)">gif</span><span class="t" style="left:1590.92px;top:5.9px;transform:scaleX(0.9804)">248 B</span><span class="t" style="left:1854.60px;top:5.9px;transform:scaleX(0.9958)">43 B</span></div>
<div class="row" style="top:880px"><span class="badge b2">200</span><span class="t" style="left:140.71px;top:5.9px;transform:scaleX(0.8613)">GET</span><svg style="left:270.2px;top:8px" width="20" height="20" viewBox="0 0 20 20"><path d="M5.6 9.6V6.9a4.5 4.5 0 0 1 9 0V9.6" fill="none" stroke="#9d9d9f" stroke-width="2.5"/><rect x="2" y="9" width="16" height="9.8" rx="1.5" fill="#9d9d9f"/><path d="M1.4 18.5L17.9 2" stroke="#fff" stroke-width="3.6"/><path d="M1.2 18.7L18.1 1.8" stroke="#b3163f" stroke-width="2.1" stroke-linecap="round"/></svg><span class="t" style="left:295.32px;top:5.9px;transform:scaleX(0.9827)">10.10.10.2</span><span class="t" style="left:536.50px;top:5.9px;transform:scaleX(1.0253)">WzdStartHelpRpm.htm</span><span class="t" style="left:1195.50px;top:5.9px;color:#0b4d96">common.js</span><span class="t" style="left:1274.98px;top:5.9px;transform:scaleX(1.0122);color:#0074e8">:329</span><span class="t" style="left:1311.16px;top:5.9px;transform:scaleX(1.0374)">(subdocument)</span><span class="t" style="left:1458.71px;top:5.9px;transform:scaleX(1.1722)">html</span><span class="t" style="left:1590.51px;top:5.9px;transform:scaleX(0.9880)">1.20 kB</span><span class="t" style="left:1853.69px;top:5.9px;transform:scaleX(1.0121)">1.05 kB</span></div>
<div class="row odd" style="top:916px"><span class="badge b2">200</span><span class="t" style="left:140.71px;top:5.9px;transform:scaleX(0.8613)">GET</span><svg style="left:270.2px;top:8px" width="20" height="20" viewBox="0 0 20 20"><path d="M5.6 9.6V6.9a4.5 4.5 0 0 1 9 0V9.6" fill="none" stroke="#9d9d9f" stroke-width="2.5"/><rect x="2" y="9" width="16" height="9.8" rx="1.5" fill="#9d9d9f"/><path d="M1.4 18.5L17.9 2" stroke="#f9f9fa" stroke-width="3.6"/><path d="M1.2 18.7L18.1 1.8" stroke="#b3163f" stroke-width="2.1" stroke-linecap="round"/></svg><span class="t" style="left:295.32px;top:5.9px;transform:scaleX(0.9827)">10.10.10.2</span><span class="t" style="left:535.83px;top:5.9px;transform:scaleX(0.9527)">css_help.css</span><span class="t" style="left:1195.28px;top:5.9px;transform:scaleX(1.0460)">stylesheet</span><span class="t" style="left:1459.36px;top:5.9px;transform:scaleX(0.9106)">css</span><span class="t" style="left:1591.02px;top:5.9px;transform:scaleX(0.9780)">869 B</span><span class="t" style="left:1854.10px;top:5.9px">664 B</span></div>
<div class="row" style="top:952px"><span class="badge b2">200</span><span class="t" style="left:140.71px;top:5.9px;transform:scaleX(0.8613)">GET</span><svg style="left:270.2px;top:8px" width="20" height="20" viewBox="0 0 20 20"><path d="M5.6 9.6V6.9a4.5 4.5 0 0 1 9 0V9.6" fill="none" stroke="#9d9d9f" stroke-width="2.5"/><rect x="2" y="9" width="16" height="9.8" rx="1.5" fill="#9d9d9f"/><path d="M1.4 18.5L17.9 2" stroke="#fff" stroke-width="3.6"/><path d="M1.2 18.7L18.1 1.8" stroke="#b3163f" stroke-width="2.1" stroke-linecap="round"/></svg><span class="t" style="left:295.32px;top:5.9px;transform:scaleX(0.9827)">10.10.10.2</span><span class="t" style="left:535.35px;top:5.9px;transform:scaleX(1.0420)">helpPic.gif</span><span class="t" style="left:1194.48px;top:5.9px;transform:scaleX(1.1097)">img</span><span class="t" style="left:1459.30px;top:5.9px;transform:scaleX(1.1687)">gif</span><span class="t" style="left:1590.92px;top:5.9px;transform:scaleX(0.9804)">248 B</span><span class="t" style="left:1854.60px;top:5.9px;transform:scaleX(0.9958)">43 B</span></div>
</div>
<div class="vsep" style="left:137px;top:90px;height:36px"></div><div class="vsep" style="left:137px;top:127px;height:850px;background:#ececee"></div><div class="vsep" style="left:269px;top:90px;height:36px"></div><div class="vsep" style="left:269px;top:127px;height:850px;background:#ececee"></div><div class="vsep" style="left:533px;top:90px;height:36px"></div><div class="vsep" style="left:533px;top:127px;height:850px;background:#ececee"></div><div class="vsep" style="left:1192px;top:90px;height:36px"></div><div class="vsep" style="left:1192px;top:127px;height:850px;background:#ececee"></div><div class="vsep" style="left:1455px;top:90px;height:36px"></div><div class="vsep" style="left:1455px;top:127px;height:850px;background:#ececee"></div><div class="vsep" style="left:1587px;top:90px;height:36px"></div><div class="vsep" style="left:1587px;top:127px;height:850px;background:#ececee"></div><div class="vsep" style="left:1851px;top:90px;height:36px"></div><div class="vsep" style="left:1851px;top:127px;height:850px;background:#ececee"></div><div class="a" id="tip"><span class="t" style="left:5.04px;top:2.1px;transform:scaleX(0.9650);font-size:15.5px;color:#f4f4f4">http://10.10.10.2/OSHEABYBZJIHBISA/help/WzdStartHelpRpm.htm</span></div>
<div class="a" id="split"></div>
<div class="a" id="side">
<div class="a" id="stabs"><div class="a" style="left:42px;top:0;width:100px;height:3px;background:#1580ee"></div><svg style="left:10px;top:9px" width="22" height="18" viewBox="0 0 22 18" ><rect x="16.2" y="1" width="4.8" height="16" fill="#b4b4b7"/><rect x="1" y="1" width="20" height="16" rx="1" fill="none" stroke="#3b3b40" stroke-width="1.7"/><path d="M16.2 1v16" stroke="#3b3b40" stroke-width="1.6"/><path d="M6 5l6 4-6 4z" fill="#b4b4b7" stroke="#3b3b40" stroke-width="1.5" stroke-linejoin="round"/></svg></div><span class="t tab sel" style="left:57.91px;top:5.7px;transform:scaleX(0.9949);font-size:18px">Headers</span><span class="t tab" style="left:157.71px;top:5.7px;transform:scaleX(0.9854);font-size:18px">Cookies</span><span class="t tab" style="left:253.90px;top:5.7px;font-size:18px">Request</span><span class="t tab" style="left:353.24px;top:5.7px;transform:scaleX(0.9741);font-size:18px">Response</span><span class="t tab" style="left:464.39px;top:5.7px;transform:scaleX(1.0156);font-size:18px">Timings</span><div class="hl" style="top:74px"></div><svg style="left:13px;top:48.5px" width="16" height="16" viewBox="0 0 16 16" ><path d="M1 1h14l-5.4 6.6v7l-3.2-2.2V7.6z" fill="#d7d7db" stroke="#9a9a9e" stroke-width="1.4" stroke-linejoin="round"/></svg><span class="t ph" style="left:33.57px;top:43.9px;transform:scaleX(1.0219)">Filter Headers</span><div class="vsep" style="left:700px;top:43px;height:25px;background:#ebebed"></div><span class="t" style="left:706.70px;top:43.9px">Block</span><div class="vsep" style="left:754px;top:43px;height:25px;background:#ebebed"></div><span class="t" style="left:760.94px;top:43.9px;transform:scaleX(0.9671)">Resend</span><svg style="left:14px;top:94px" width="8" height="12" viewBox="0 0 8 12" ><path d="M0.3 0.3l7.4 5.7-7.4 5.7z" fill="#8f8f94"/></svg><span class="t lbl" style="left:30.26px;top:87.7px;transform:scaleX(0.9055);font-weight:bold">GET</span><span class="t lbl" style="left:68.71px;top:87.7px;transform:scaleX(1.1744)">http://</span><span class="t" style="left:119.30px;top:87.7px">10.10.10.2/OSHEABYBZJIHBISA/help/WzdStartHelpRpm.htm</span><div class="hl" style="top:126px"></div><span class="t lbl" style="left:29.79px;top:138.0px;transform:scaleX(1.0214)">Status</span><span class="t" style="left:170.71px;top:138.5px;transform:scaleX(0.9940);font-weight:bold;color:#058b00;font-family:'DejaVu Sans Mono',monospace">200</span><span class="t" style="left:205.74px;top:138.0px;transform:scaleX(0.9377);color:#058b00">OK</span><svg style="left:235.69999999999982px;top:140.7px" width="20.6" height="20.6" viewBox="0 0 20.6 20.6" ><circle cx="10.3" cy="10.3" r="9.4" fill="none" stroke="#3b3b40" stroke-width="1.7"/></svg><span class="t" style="left:241.20px;top:139.4px;font-size:16px;font-weight:bold;color:#333336">?</span><span class="t lbl" style="left:30.50px;top:169.8px;transform:scaleX(1.0230)">Version</span><span class="t" style="left:169.26px;top:169.8px;transform:scaleX(0.9573)">HTTP/1.1</span><span class="t lbl" style="left:30.19px;top:197.7px;transform:scaleX(1.0361)">Transferred</span><span class="t" style="left:169.33px;top:197.7px;transform:scaleX(0.9723)">1.20 kB (1.05 kB size)</span><span class="t lbl" style="left:29.17px;top:224.6px;transform:scaleX(1.0235)">Referrer Policy</span><span class="t" style="left:170.09px;top:224.6px;transform:scaleX(1.0362)">strict-origin-when-cross-origin</span><div class="sec" style="top:258px"><svg style="left:10.299999999999955px;top:14.4px" width="12.6" height="8" viewBox="0 0 12.6 8"><path d="M0.2 0.2h12.2l-6.1 7.6z" fill="#8a8a8e"/></svg><span class="t dark" style="left:29.44px;top:5.5px;transform:scaleX(0.9748);font-size:18px">Response Headers (155 B)</span><span class="t" style="left:738.88px;top:5.5px;transform:scaleX(0.9373)">Raw</span><div class="a" style="left:777px;top:8px;width:38px;height:20px;border-radius:10px;background:#d7d7db"></div><div class="a" style="left:781px;top:12px;width:12px;height:12px;border-radius:6px;background:#fff"></div></div><svg style="left:16.700000000000045px;top:299.6px" width="20.8" height="20.8" viewBox="0 0 20.8 20.8"><circle cx="10.4" cy="10.4" r="9.6" fill="none" stroke="#a2a2a5" stroke-width="1.4"/></svg><span class="t" style="left:22.70px;top:298.0px;font-size:16px;color:#a2a2a5">?</span><span class="t hn" style="left:56.78px;top:297.8px;transform:scaleX(1.0306)">Connection:</span><span class="t" style="left:155.30px;top:297.8px">close</span><svg style="left:16.700000000000045px;top:328.0px" width="20.8" height="20.8" viewBox="0 0 20.8 20.8"><circle cx="10.4" cy="10.4" r="9.6" fill="none" stroke="#a2a2a5" stroke-width="1.4"/></svg><span class="t" style="left:22.70px;top:326.4px;font-size:16px;color:#a2a2a5">?</span><span class="t hn" style="left:56.78px;top:326.2px;transform:scaleX(1.0211)">Content-Type:</span><span class="t" style="left:170.77px;top:326.2px;transform:scaleX(1.1623)">text/html</span><svg style="left:16.700000000000045px;top:356.4px" width="20.8" height="20.8" viewBox="0 0 20.8 20.8"><circle cx="10.4" cy="10.4" r="9.6" fill="none" stroke="#a2a2a5" stroke-width="1.4"/></svg><span class="t" style="left:22.70px;top:354.8px;font-size:16px;color:#a2a2a5">?</span><span class="t hn" style="left:56.89px;top:354.6px;transform:scaleX(1.0099)">Server:</span><span class="t" style="left:117.87px;top:354.6px;transform:scaleX(1.0236)">Router Webserver</span><svg style="left:16.700000000000045px;top:384.8px" width="20.8" height="20.8" viewBox="0 0 20.8 20.8"><circle cx="10.4" cy="10.4" r="9.6" fill="none" stroke="#a2a2a5" stroke-width="1.4"/></svg><span class="t" style="left:22.70px;top:383.2px;font-size:16px;color:#a2a2a5">?</span><span class="t hn" style="left:57.60px;top:383.0px;transform:scaleX(1.0337)">WWW-Authenticate:</span><span class="t" style="left:218.31px;top:383.0px;transform:scaleX(0.9897)">Basic realm=&quot;TP-LINK Wireless N Router WR841N&quot;</span><div class="sec" style="top:410px"><svg style="left:10.299999999999955px;top:14.4px" width="12.6" height="8" viewBox="0 0 12.6 8"><path d="M0.2 0.2h12.2l-6.1 7.6z" fill="#8a8a8e"/></svg><span class="t dark" style="left:29.41px;top:5.5px;transform:scaleX(0.9905);font-size:18px">Request Headers (532 B)</span><span class="t" style="left:738.88px;top:5.5px;transform:scaleX(0.9373)">Raw</span><div class="a" style="left:777px;top:8px;width:38px;height:20px;border-radius:10px;background:#d7d7db"></div><div class="a" style="left:781px;top:12px;width:12px;height:12px;border-radius:6px;background:#fff"></div></div><svg style="left:16.700000000000045px;top:451.4px" width="20.8" height="20.8" viewBox="0 0 20.8 20.8"><circle cx="10.4" cy="10.4" r="9.6" fill="none" stroke="#a2a2a5" stroke-width="1.4"/></svg><span class="t" style="left:22.70px;top:449.8px;font-size:16px;color:#a2a2a5">?</span><span class="t hn" style="left:57.60px;top:449.6px;transform:scaleX(1.0254)">Accept:</span><span class="t" style="left:122.29px;top:449.6px;transform:scaleX(1.0569)">text/html,application/xhtml+xml,application/xml;q=0.9,image/avif,image/webp,*/*;q=0.8</span><svg style="left:16.700000000000045px;top:479.9px" width="20.8" height="20.8" viewBox="0 0 20.8 20.8"><circle cx="10.4" cy="10.4" r="9.6" fill="none" stroke="#a2a2a5" stroke-width="1.4"/></svg><span class="t" style="left:22.70px;top:478.3px;font-size:16px;color:#a2a2a5">?</span><span class="t hn" style="left:57.60px;top:478.1px">Accept-Encoding:</span><span class="t" style="left:194.87px;top:478.1px;transform:scaleX(1.0502)">gzip, deflate</span><svg style="left:16.700000000000045px;top:508.4px" width="20.8" height="20.8" viewBox="0 0 20.8 20.8"><circle cx="10.4" cy="10.4" r="9.6" fill="none" stroke="#a2a2a5" stroke-width="1.4"/></svg><span class="t" style="left:22.70px;top:506.8px;font-size:16px;color:#a2a2a5">?</span><span class="t hn" style="left:57.60px;top:506.6px;transform:scaleX(0.9891)">Accept-Language:</span><span class="t" style="left:199.33px;top:506.6px;transform:scaleX(0.9637)">en-US,en;q=0.5</span><svg style="left:16.700000000000045px;top:537.1px" width="20.8" height="20.8" viewBox="0 0 20.8 20.8"><circle cx="10.4" cy="10.4" r="9.6" fill="none" stroke="#a2a2a5" stroke-width="1.4"/></svg><span class="t" style="left:22.70px;top:535.5px;font-size:16px;color:#a2a2a5">?</span><span class="t hn" style="left:56.78px;top:535.3px;transform:scaleX(1.0306)">Connection:</span><span class="t" style="left:154.88px;top:535.3px;transform:scaleX(1.0213)">keep-alive</span><div class="a" style="left:0;top:563px;width:825px;height:51.5px;background:#0074e8"></div><svg style="left:16.700000000000045px;top:565.4px" width="20.8" height="20.8" viewBox="0 0 20.8 20.8"><circle cx="10.4" cy="10.4" r="9.6" fill="none" stroke="#0a5dc2" stroke-width="1.4"/></svg><span class="t" style="left:22.70px;top:563.8px;font-size:16px;color:#0a5dc2">?</span><span class="t" style="left:56.79px;top:563.6px;transform:scaleX(1.0156);color:#fff">Cookie:</span><span class="t" style="left:121.90px;top:563.6px;transform:scaleX(0.9941);color:#fff">Authorization=Basic%20YWRtaW46MjEyMzJmMjk3YTU3YTVhNzQzODk0YTBlNGE4MDF</span><span class="t" style="left:57.91px;top:587.7px;transform:scaleX(0.9902);color:#fff">mYzM%3D</span><svg style="left:16.700000000000045px;top:618.3px" width="20.8" height="20.8" viewBox="0 0 20.8 20.8"><circle cx="10.4" cy="10.4" r="9.6" fill="none" stroke="#a2a2a5" stroke-width="1.4"/></svg><span class="t" style="left:22.70px;top:616.7px;font-size:16px;color:#a2a2a5">?</span><span class="t hn" style="left:56.23px;top:616.5px;transform:scaleX(1.0552)">Host:</span><span class="t" style="left:105.72px;top:616.5px;transform:scaleX(0.9814)">10.10.10.2</span><svg style="left:16.700000000000045px;top:646.6px" width="20.8" height="20.8" viewBox="0 0 20.8 20.8"><circle cx="10.4" cy="10.4" r="9.6" fill="none" stroke="#a2a2a5" stroke-width="1.4"/></svg><span class="t" style="left:22.70px;top:645.0px;font-size:16px;color:#a2a2a5">?</span><span class="t hn" style="left:56.23px;top:644.8px;transform:scaleX(1.0525)">Referer:</span><span class="t" style="left:128.40px;top:644.8px;transform:scaleX(0.9803);font-style:italic">http://10.10.10.2/OSHEABYBZJIHBISA/userRpm/Index.htm</span><svg style="left:16.700000000000045px;top:675.1px" width="20.8" height="20.8" viewBox="0 0 20.8 20.8"><circle cx="10.4" cy="10.4" r="9.6" fill="none" stroke="#a2a2a5" stroke-width="1.4"/></svg><span class="t" style="left:22.70px;top:673.5px;font-size:16px;color:#a2a2a5">?</span><span class="t hn" style="left:56.40px;top:673.3px">Upgrade-Insecure-Requests:</span><span class="t" style="left:277.10px;top:673.3px">1</span><svg style="left:16.700000000000045px;top:703.4px" width="20.8" height="20.8" viewBox="0 0 20.8 20.8"><circle cx="10.4" cy="10.4" r="9.6" fill="none" stroke="#a2a2a5" stroke-width="1.4"/></svg><span class="t" style="left:22.70px;top:701.8px;font-size:16px;color:#a2a2a5">?</span><span class="t hn" style="left:56.38px;top:701.6px;transform:scaleX(1.0193)">User-Agent:</span><span class="t" style="left:153.38px;top:701.6px;transform:scaleX(1.0125)">Mozilla/5.0 (X11; Ubuntu; Linux x86_64; rv:109.0) Gecko/20100101 Firefox/113.0</span></div>
<div class="a" style="left:2808px;top:0;width:1px;height:977px;background:#5a5a5a;z-index:6"></div>
</body></html>
